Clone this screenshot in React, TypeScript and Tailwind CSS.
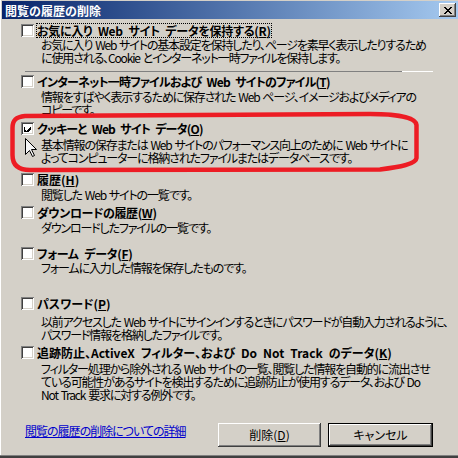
import React from "react";

const FONT = "font-['Noto_Sans_CJK_JP','Noto_Sans_CJK_SC',sans-serif] [font-feature-settings:'palt']";

const sp = (s: string) => s.replace(/ /g, "\u2002");
const spd = (s: string) => s.replace(/ /g, "\u2004");

function CheckBox({ checked }: { checked?: boolean }) {
  return (
    <div className="w-[13px] h-[13px] shrink-0 bg-white shadow-[inset_1px_1px_#808080,inset_-1px_-1px_#ffffff,inset_2px_2px_#404040,inset_-2px_-2px_#d4d0c8] flex items-center justify-center">
      {checked && (
        <svg width="7" height="7" viewBox="0 0 7 7" shapeRendering="crispEdges">
          <path d="M0 2h1v3h1v1h1v-1h1v-1h1v-1h1v-1h1v3h-1v1h-1v1h-1v1h-1v1h-1v-1h-1v-1h-1z" fill="#000" />
        </svg>
      )}
    </div>
  );
}

function Item({
  label,
  k,
  lines,
  checked,
  focus,
  mt,
  dmt,
  lt = "",
}: {
  label: string;
  k: string;
  lines: string[];
  checked?: boolean;
  focus?: boolean;
  mt: string;
  dmt: string;
  lt?: string;
}) {
  return (
    <div className={`flex flex-col ${mt}`}>
      <div className="flex items-center h-[13px]">
        <CheckBox checked={checked} />
        <span
          className={`ml-[3px] font-bold text-[12px] leading-[13px] whitespace-nowrap ${lt} ${
            focus ? "outline-1 outline-dotted outline-black outline-offset-0" : ""
          }`}
        >
          {sp(label)}(<u>{k}</u>)
        </span>
      </div>
      <div className={`pl-[20px] ${dmt} flex flex-col`}>
        {lines.map((l, i) => (
          <div key={i} className="text-[12px] leading-[13px] tracking-[-1.15px] whitespace-nowrap">
            {spd(l)}
          </div>
        ))}
      </div>
    </div>
  );
}

const btn =
  "bg-[#d4d0c8] text-[12px] flex items-center justify-center shadow-[inset_-1px_-1px_#404040,inset_1px_1px_#ffffff,inset_-2px_-2px_#808080,inset_2px_2px_#d4d0c8]";

export default function App() {
  return (
    <div className={`relative w-[458px] h-[458px] overflow-hidden bg-[#d4d0c8] text-black flex flex-col ${FONT}`}>
      <div className="flex-1 flex flex-col border-l border-l-white pt-[1px] min-h-0">
        {/* title bar */}
        <div className="ml-[1px] h-[18px] bg-linear-to-r from-[#0a246a] to-[#a6caf0] flex items-center justify-between">
          <span className="pl-[3px] text-white font-bold text-[12px] leading-[13px] [font-feature-settings:normal]">
            閲覧の履歴の削除
          </span>
          <div className="mr-[2px] w-[17px] h-[14px] bg-[#d4d0c8] shadow-[inset_-1px_-1px_#404040,inset_1px_1px_#ffffff,inset_-2px_-2px_#808080] flex items-center justify-center">
            <svg width="8" height="7" viewBox="0 0 8 7" shapeRendering="crispEdges">
              <path
                d="M0 0h2v1h1v1h2v-1h1v-1h2v1h-1v1h-1v1h-1v1h1v1h1v1h1v1h-2v-1h-1v-1h-2v1h-1v1h-2v-1h1v-1h1v-1h1v-1h-1v-1h-1v-1h-1z"
                fill="#000"
              />
            </svg>
          </div>
        </div>

        {/* body */}
        <div className="flex-1 flex flex-col pl-[20px]">
          <Item
            mt="mt-[5px]"
            dmt="mt-[1px]"
            focus
            lt="tracking-[-0.3px]"
            label="お気に入り Web サイト データを保持する"
            k="R"
            lines={[
              "お気に入り Web サイトの基本設定を保持したり、ページを素早く表示したりするため",
              "に使用される、Cookie とインターネット一時ファイルを保持します。",
            ]}
          />
          <div className="mt-[7px] ml-[4px] flex h-[1px]">
            <div className="w-[377px] bg-[#808080]" />
            <div className="w-[31px] bg-white" />
          </div>
          <Item
            mt="mt-[3px]"
            dmt="mt-[2px]"
            lt="tracking-[-0.8px]"
            label="インターネット一時ファイルおよび Web サイトのファイル"
            k="T"
            lines={[
              "情報をすばやく表示するために保存された Web ページ、イメージおよびメディアの",
              "コピーです。",
            ]}
          />
          <Item
            mt="mt-[6px]"
            dmt="mt-[3px]"
            lt="tracking-[-0.8px]"
            checked
            label="クッキーと Web サイト データ"
            k="O"
            lines={[
              "基本情報の保存または Web サイトのパフォーマンス向上のために Web サイトに",
              "よってコンピューターに格納されたファイルまたはデータベースです。",
            ]}
          />
          <Item
            mt="mt-[9px]"
            dmt="mt-[2px]"
            label="履歴"
            k="H"
            lines={["閲覧した Web サイトの一覧です。"]}
          />
          <Item
            mt="mt-[5px]"
            dmt="mt-[2px]"
            lt="tracking-[-0.4px]"
            label="ダウンロードの履歴"
            k="W"
            lines={["ダウンロードしたファイルの一覧です。"]}
          />
          <Item
            mt="mt-[13px]"
            dmt="mt-[1px]"
            lt="tracking-[-0.3px]"
            label="フォーム データ"
            k="F"
            lines={["フォームに入力した情報を保存したものです。"]}
          />
          <Item
            mt="mt-[23px]"
            dmt="mt-[5px]"
            label="パスワード"
            k="P"
            lines={[
              "以前アクセスした Web サイトにサインインするときにパスワードが自動入力されるように、",
              "パスワード情報を格納したファイルです。",
            ]}
          />
          <Item
            mt="mt-[5px]"
            dmt="mt-[3px]"
            label="追跡防止、ActiveX フィルター、および Do Not Track のデータ"
            k="K"
            lines={[
              "フィルター処理から除外される Web サイトの一覧、閲覧した情報を自動的に流出させ",
              "ている可能性があるサイトを検出するために追跡防止が使用するデータ、および Do",
              "Not Track 要求に対する例外です。",
            ]}
          />

          {/* bottom row */}
          <div className="mt-[22px] flex items-start">
            <span className="ml-[4px] mt-[1px] text-[12px] leading-[13px] tracking-[-1px] text-[#0000cc] underline whitespace-nowrap">
              閲覧の履歴の削除についての詳細
            </span>
            <div className="ml-auto mr-[25px] flex gap-[7px]">
              <div className={`w-[103px] h-[24px] ${btn}`}>
                削除(<u>D</u>)
              </div>
              <div className="w-[105px] h-[24px] border border-black">
                <div className={`w-full h-[22px] ${btn}`}>キャンセル</div>
              </div>
            </div>
          </div>
        </div>
      </div>
      <div className="h-[1px] bg-[#808080]" />
      <div className="h-[2px] bg-[#404040]" />

      {/* mouse cursor */}
      <svg className="absolute left-[25px] top-[138px] pointer-events-none" width="13" height="20" viewBox="0 0 13 20">
        <path
          d="M0.5 0.5 L0.5 16.5 L4.5 12.5 L7.5 18.5 L9.5 17.5 L6.5 11.5 L11.5 11.5 Z"
          fill="#f4f4f4"
          stroke="#000"
          strokeWidth="1"
        />
      </svg>

      {/* red annotation */}
      <svg className="absolute left-0 top-0 pointer-events-none" width="458" height="458" viewBox="0 0 458 458">
        <path
          d="M25 116 L370 114 C395 114 416 117 416.5 125 L416.5 158 C416 164 400 167 380 169.5 L30 170 C18 170 12.5 165 12.5 155 L12.5 128 C12.5 120 16 117 25 116 Z"
          fill="none"
          stroke="#ed1c24"
          strokeWidth="4.5"
        />
      </svg>
    </div>
  );
}
